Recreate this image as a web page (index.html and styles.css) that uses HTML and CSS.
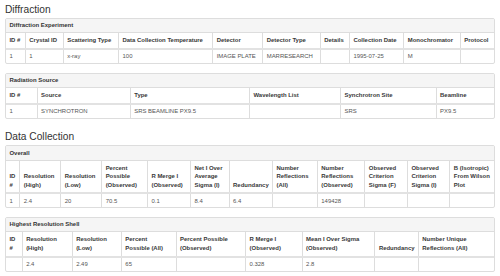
FILE: index.html
```html
<!DOCTYPE html>
<html>
<head>
<meta charset="utf-8">
<link rel="stylesheet" href="styles.css">
</head>
<body>
<div class="page">
  <section class="section">
    <h3 class="title">Diffraction</h3>
    <div class="panel">
      <div class="panel-heading">Diffraction Experiment</div>
      <table class="grid">
        <thead>
          <tr><th>ID #</th><th>Crystal ID</th><th>Scattering Type</th><th>Data Collection Temperature</th><th>Detector</th><th>Detector Type</th><th>Details</th><th>Collection Date</th><th>Monochromator</th><th>Protocol</th></tr>
        </thead>
        <tbody>
          <tr><td>1</td><td>1</td><td>x-ray</td><td>100</td><td>IMAGE PLATE</td><td>MARRESEARCH</td><td></td><td>1995-07-25</td><td>M</td><td></td></tr>
        </tbody>
      </table>
    </div>
    <div class="panel">
      <div class="panel-heading">Radiation Source</div>
      <table class="grid">
        <thead>
          <tr><th>ID #</th><th>Source</th><th>Type</th><th>Wavelength List</th><th>Synchrotron Site</th><th>Beamline</th></tr>
        </thead>
        <tbody>
          <tr><td>1</td><td>SYNCHROTRON</td><td>SRS BEAMLINE PX9.5</td><td></td><td>SRS</td><td>PX9.5</td></tr>
        </tbody>
      </table>
    </div>
  </section>
  <section class="section">
    <h3 class="title">Data Collection</h3>
    <div class="panel">
      <div class="panel-heading">Overall</div>
      <table class="grid">
        <thead>
          <tr><th>ID #</th><th>Resolution (High)</th><th>Resolution (Low)</th><th>Percent Possible (Observed)</th><th>R Merge I (Observed)</th><th>Net I Over Average Sigma (I)</th><th>Redundancy</th><th>Number Reflections (All)</th><th>Number Reflections (Observed)</th><th>Observed Criterion Sigma (F)</th><th>Observed Criterion Sigma (I)</th><th>B (Isotropic) From Wilson Plot</th></tr>
        </thead>
        <tbody>
          <tr><td>1</td><td>2.4</td><td>20</td><td>70.5</td><td>0.1</td><td>8.4</td><td>6.4</td><td></td><td>149428</td><td></td><td></td><td></td></tr>
        </tbody>
      </table>
    </div>
    <div class="panel">
      <div class="panel-heading">Highest Resolution Shell</div>
      <table class="grid">
        <thead>
          <tr><th>ID #</th><th>Resolution (High)</th><th>Resolution (Low)</th><th>Percent Possible (All)</th><th>Percent Possible (Observed)</th><th>R Merge I (Observed)</th><th>Mean I Over Sigma (Observed)</th><th>Redundancy</th><th>Number Unique Reflections (All)</th></tr>
        </thead>
        <tbody>
          <tr><td></td><td>2.4</td><td>2.49</td><td>65</td><td></td><td>0.328</td><td>2.8</td><td></td><td></td></tr>
        </tbody>
      </table>
    </div>
  </section>
</div>
</body>
</html>
```
FILE: styles.css
```css
html, body {
  margin: 0;
  padding: 0;
  background: #fff;
}
body {
  font-family: "Liberation Sans", Arial, Helvetica, sans-serif;
  font-size: 5.95px;
  line-height: 8.5px;
  color: #333;
}
.page {
  padding: 0 5px;
}
.section {
  display: flow-root;
}
.title {
  font-size: 10.2px;
  font-weight: normal;
  line-height: 1.1;
  margin: 3.5px 0 3px;
  color: #333;
}
.panel {
  border: 1px solid #ddd;
  border-radius: 2px;
  margin-bottom: 8.5px;
  overflow: hidden;
  background: #fff;
}
.panel-heading {
  background: #f5f5f5;
  border-bottom: 1px solid #ddd;
  padding: 2.5px 3.5px;
  font-weight: bold;
  color: #333;
}
.grid {
  width: 100%;
  border-collapse: collapse;
  border-spacing: 0;
}
.grid th {
  text-align: left;
  vertical-align: bottom;
  font-weight: bold;
  color: #383838;
  padding: 3.15px 3.4px;
  border-left: 1px solid #ddd;
  border-right: 1px solid #ddd;
  border-bottom: 2px solid #e2e2e2;
}
.grid td {
  padding: 2.25px 3.4px;
  color: #555;
  border: 1px solid #ddd;
  border-bottom: 0;
  vertical-align: top;
}
.grid tr > :first-child {
  border-left: 0;
}
.grid tr > :last-child {
  border-right: 0;
}
```
